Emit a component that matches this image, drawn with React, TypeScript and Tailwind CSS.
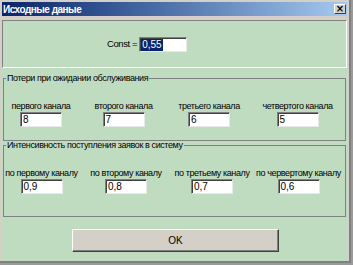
function Field({ value }: { value: string }) {
  return (
    <div className="h-[15px] w-[42px] bg-white border border-t-[#808080] border-l-[#808080] border-r-[#e8e8e8] border-b-[#e8e8e8] shadow-[inset_1px_1px_0_#404040] pl-[2px] text-[10px] leading-[13px] text-black">
      {value}
    </div>
  );
}

function Column({ label, value }: { label: string; value: string }) {
  return (
    <div className="flex flex-col items-center">
      <span className="text-[9px] leading-[12px] tracking-[-0.4px] text-black whitespace-nowrap">{label}</span>
      <Field value={value} />
    </div>
  );
}

function GroupBox({ title, className, children }: { title: string; className: string; children: React.ReactNode }) {
  return (
    <div className={className}>
      <div className="flex h-[11px]">
        <div className="w-[3px] h-[6px] self-end border-t border-l border-[#808080]" />
        <span className="px-[1px] text-[9px] leading-[11px] tracking-[-0.4px] text-black whitespace-nowrap">{title}</span>
        <div className="flex-1 h-[6px] self-end border-t border-r border-[#808080]" />
      </div>
      {children}
    </div>
  );
}

export default function App() {
  return (
    <div className="w-[353px] h-[265px] bg-[#9a9a9a] font-['Liberation_Sans',Arial,sans-serif] overflow-hidden">
      <div className="w-[351px] h-[263px] bg-[#d4d0c8] border-r-2 border-b-2 border-[#808080] pl-[2px] pt-[2px] flex flex-col">
        {/* title bar */}
        <div className="h-[14px] w-[345px] bg-gradient-to-r from-[#0a246a] to-[#a6caf0] flex items-center justify-between pl-[1px] pr-[1px]">
          <span className="text-white text-[10px] font-bold leading-[13px] tracking-[-0.5px]">Исходные даные</span>
          <div className="w-[12px] h-[10px] bg-[#d4d0c8] border border-t-white border-l-white border-r-[#404040] border-b-[#404040] flex items-center justify-center text-[10px] leading-[8px] font-bold text-black font-['DejaVu_Sans',sans-serif]">
            ×
          </div>
        </div>

        {/* client */}
        <div className="mt-[4px] w-[345px] h-[241px] bg-[#c0dcc0] flex flex-col">
          <div className="h-[48px] border border-t-[#808080] border-l-[#808080] border-r-white border-b-white flex items-center pl-[104px] text-[10px] leading-[12px]">
            <span className="text-[9.5px] tracking-[-0.4px] text-black">Const =</span>
            <div className="ml-[2px] h-[15px] w-[48px] bg-white border border-t-[#808080] border-l-[#808080] border-r-[#e8e8e8] border-b-[#e8e8e8] shadow-[inset_1px_1px_0_#404040] pl-[1px] pt-[1px]">
              <span className="block w-fit bg-[#0a246a] text-white px-[1px]">0,55</span>
            </div>
          </div>

          <GroupBox title="Потери при ожидании обслуживания" className="mt-[5px] mx-[1px]">
            <div className="h-[57px] border-l border-r border-b border-[#808080] pt-[16px]">
              <div className="grid grid-cols-[74px_91px_80px_97px]">
                <Column label="первого канала" value="8" />
                <Column label="второго канала" value="7" />
                <Column label="третьего канала" value="6" />
                <Column label="четвертого канала" value="5" />
              </div>
            </div>
          </GroupBox>

          <GroupBox title="Интенсивность поступления заявок в систему" className="-mt-[1px] mx-[1px]">
            <div className="h-[66px] border-l border-r border-b border-[#808080] pt-[16px]">
              <div className="grid grid-cols-[75px_94px_78px_95px]">
                <Column label="по первому каналу" value="0,9" />
                <Column label="по второму каналу" value="0,8" />
                <Column label="по третьему каналу" value="0,7" />
                <Column label="по червертому каналу" value="0,6" />
              </div>
            </div>
          </GroupBox>

          <div className="mt-[12px] ml-[70px] w-[207px] h-[23px] bg-[#d4d0c8] border border-t-white border-l-white border-r-[#404040] border-b-[#404040] shadow-[inset_-1px_-1px_0_#808080] flex items-center justify-center text-[10px] text-black">
            OK
          </div>
        </div>
      </div>
    </div>
  );
}
